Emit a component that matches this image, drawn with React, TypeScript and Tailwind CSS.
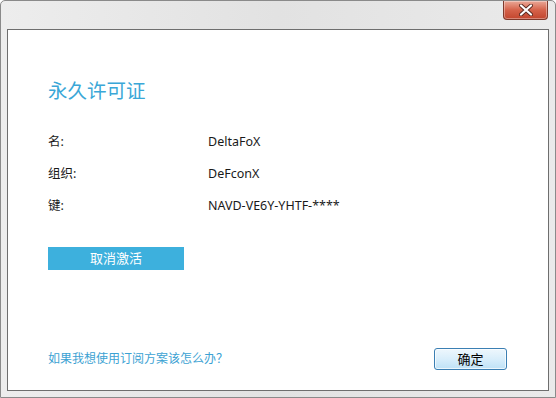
const font = "font-['Noto_Sans','Noto_Sans_CJK_SC',sans-serif]";

const Row = ({ label, value }: { label: string; value: string }) => (
    <div className="flex items-center h-[32px] text-[12.5px] text-[#1a1a1a]">
        <span className="w-[160px]">{label}</span>
        <span>{value}</span>
    </div>
);

const CloseButton = () => (
    <div className="w-[45px] h-[19px] rounded-b-[4px] border border-t-0 border-[#7e3a2c] bg-gradient-to-b from-[#e9a897] via-[#d5624a] to-[#c2452d] flex items-center justify-center shadow-[inset_0_0_0_1px_rgba(255,255,255,0.35)]">
        <svg width="14" height="12" viewBox="0 0 14 12">
            <path d="M2 1.5 L12 10.5 M12 1.5 L2 10.5" stroke="#5a2a20" strokeWidth="4" strokeLinecap="round" />
            <path d="M2 1.5 L12 10.5 M12 1.5 L2 10.5" stroke="#ffffff" strokeWidth="2.2" strokeLinecap="round" />
        </svg>
    </div>
);

const App = () => {
    return (
        <div className={`w-[556px] h-[398px] flex flex-col border border-[#8a8a8a] rounded-t-[5px] bg-gradient-to-r from-[#ededed] via-[#e2e2e2] to-[#eaeaea] ${font}`}>
            <div className="h-[28px] flex justify-end pr-[7px]">
                <CloseButton />
            </div>
            <div className="mx-[6px] h-[362px] bg-white border border-[#6e6e6e] flex flex-col pl-[40px] pr-[41px]">
                <h1 className="mt-[46px] h-[30px] leading-[30px] text-[19.5px] text-[#3aa7d7] font-normal">
                    永久许可证
                </h1>
                <div className="mt-[20px] flex flex-col">
                    <Row label="名:" value="DeltaFoX" />
                    <Row label="组织:" value="DeFconX" />
                    <Row label="键:" value="NAVD-VE6Y-YHTF-****" />
                </div>
                <button className="mt-[25px] w-[136px] h-[23px] bg-[#3db0dd] text-white text-[13px] leading-[23px]">
                    取消激活
                </button>
                <div className="flex-1" />
                <div className="flex items-center justify-between pb-[20px]">
                    <span className="text-[12px] text-[#3ca2d3]">如果我想使用订阅方案该怎么办？</span>
                    <button className="w-[73px] h-[22px] rounded-[3px] border border-[#3b7fb3] bg-gradient-to-b from-[#eef7fd] via-[#d9eefb] to-[#bfe2f6] text-[13px] text-black leading-[20px] shadow-[inset_0_0_0_1px_rgba(255,255,255,0.7)]">
                        确定
                    </button>
                </div>
            </div>
        </div>
    );
};

export default App;
